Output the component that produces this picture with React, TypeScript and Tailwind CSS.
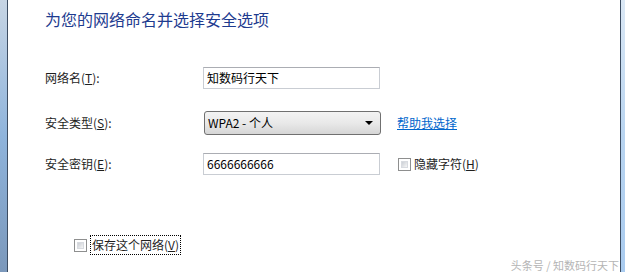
function CheckBox() {
  return (
    <span className="w-[13px] h-[13px] border border-[#8e8f8f] bg-white p-[2px] flex shrink-0">
      <span className="flex-1 bg-gradient-to-br from-[#cbcfd5] to-[#f6f6f6] border border-[#d8dbe0]" />
    </span>
  );
}

function Field({ label, mnemonic, children }: { label: string; mnemonic: string; children: React.ReactNode }) {
  return (
    <div className="flex items-center">
      <span className="w-[158px] text-[12px] text-[#1e1e1e]">
        {label}(<span className="underline">{mnemonic}</span>):
      </span>
      {children}
    </div>
  );
}

export default function App() {
  return (
    <div
      className="relative w-[625px] h-[272px] flex bg-white overflow-hidden"
      style={{ fontFamily: '"Microsoft YaHei", "Noto Sans CJK SC", sans-serif' }}
    >
      {/* left window frame */}
      <div className="w-[7px] bg-gradient-to-b from-[#c7d5e4] via-[#8fb4dc] to-[#7b98bb]" />
      <div className="w-px bg-[#3d4d62]" />

      <div className="flex-1 flex flex-col pl-[37px]">
        <h1 className="mt-[8px] h-[22px] leading-[22px] text-[16px] text-[#1e3b8f]">
          为您的网络命名并选择安全选项
        </h1>

        <div className="mt-[37px]">
          <Field label="网络名" mnemonic="T">
            <div className="w-[177px] h-[22px] border border-[#c9cdd3] border-t-[#abadb3] flex items-center px-[3px] text-[12px] text-black">
              知数码行天下
            </div>
          </Field>
        </div>

        <div className="mt-[22px]">
          <Field label="安全类型" mnemonic="S">
            <div className="ml-px w-[177px] h-[24px] rounded-[3px] border border-[#707070] bg-gradient-to-b from-[#f3f3f3] via-[#e9e9e9] to-[#d6d6d6] flex items-center pl-[3px] pr-[7px] text-[12px] text-black">
              <span className="flex-1">WPA2 - 个人</span>
              <span className="w-0 h-0 border-l-[4px] border-r-[4px] border-t-[4px] border-l-transparent border-r-transparent border-t-black" />
            </div>
            <a className="ml-[16px] text-[12px] text-[#0066cc] underline">帮助我选择</a>
          </Field>
        </div>

        <div className="mt-[18px]">
          <Field label="安全密钥" mnemonic="E">
            <div className="w-[177px] h-[22px] border border-[#c9cdd3] border-t-[#abadb3] flex items-center px-[3px] text-[12px] text-black">
              6666666666
            </div>
            <div className="ml-[18px] flex items-center gap-[3px] text-[12px] text-[#1e1e1e]">
              <CheckBox />
              <span>
                隐藏字符(<span className="underline">H</span>)
              </span>
            </div>
          </Field>
        </div>

        <div className="mt-[60px] ml-[29px] flex items-center gap-[3px] text-[12px] text-[#1e1e1e]">
          <CheckBox />
          <span className="h-[20px] leading-[18px] border border-dotted border-black px-px">
            保存这个网络(<span className="underline">V</span>)
          </span>
        </div>
      </div>

      {/* right window frame */}
      <div className="w-px bg-[#3d4d62]" />
      <div className="w-[4px] bg-gradient-to-b from-[#dbe8f5] via-[#b8d4f0] to-[#a9cbef]" />

      <span className="absolute right-[6px] bottom-[1px] text-[11px] text-[#b5b5b5] leading-none">
        头条号 / 知数码行天下
      </span>
    </div>
  );
}
